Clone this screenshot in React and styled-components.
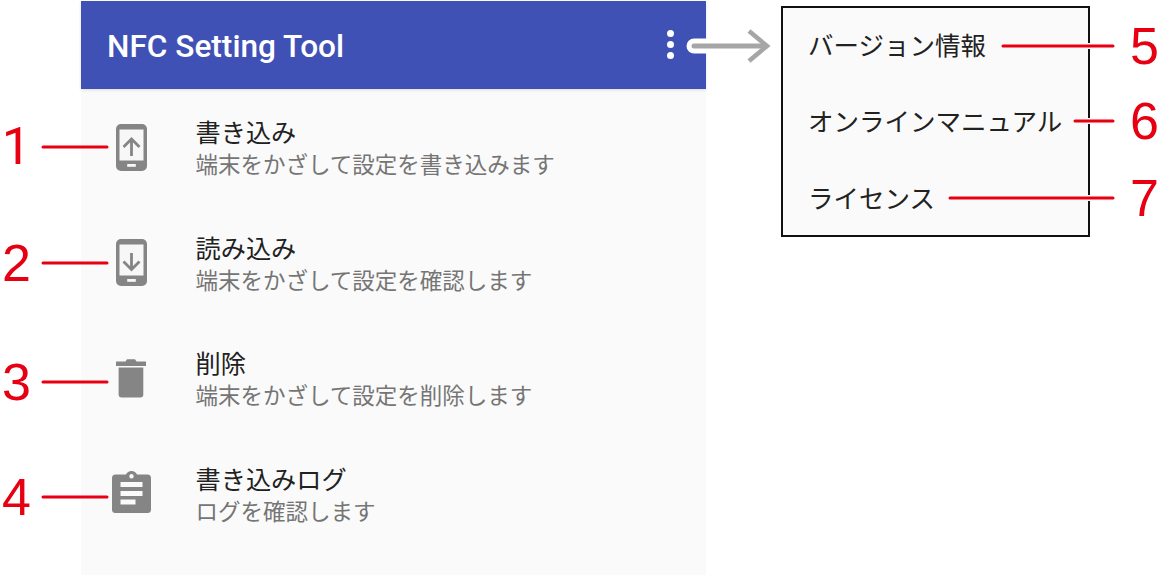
import React from "react";
import styled, { createGlobalStyle } from "styled-components";

const Global = createGlobalStyle`
  html, body { margin: 0; padding: 0; background: #fff; }
  body { width: 1160px; height: 575px; overflow: hidden; font-family: "Noto Sans CJK JP", Roboto, sans-serif; }
`;
const Page = styled.div`
  position: relative; width: 1160px; height: 575px; display: flex; align-items: flex-start;
  padding: 1px 0 0 81px; box-sizing: border-box; gap: 75px;
`;
const Phone = styled.section`
  width: 625px; height: 574px; background: #fafafa; flex: none; display: flex; flex-direction: column;
`;
const AppBar = styled.header`
  height: 88px; background: #3f51b5; flex: none; display: flex; align-items: center; justify-content: space-between;
  padding: 0 32px 0 26px; box-shadow: 0 1px 3px rgba(0,0,0,.12); box-sizing: border-box;
`;
const Title = styled.h1`
  margin: 4px 0 0; color: #fff; font: 500 31.6px/1 Roboto, sans-serif;
`;
const Dots = styled.div`
  display: flex; flex-direction: column; gap: 4px; margin-top: -2px;
`;
const Dot = styled.span`
  width: 7px; height: 7px; border-radius: 50%; background: #fff; display: block;
`;
const List = styled.ul`
  list-style: none; margin: 0; padding: 26px 0 0; display: flex; flex-direction: column;
`;
const Row = styled.li`
  height: 115.67px; display: flex; box-sizing: border-box;
`;
const IconCell = styled.div`
  width: 100px; margin-right: 15px; flex: none; height: 64px; display: flex; align-items: center; justify-content: center;
  color: #858585;
`;
const Texts = styled.div`
  display: flex; flex-direction: column; margin-left: -0.5px;
`;
const RowTitle = styled.div`
  font-size: 25.2px; line-height: 32px; color: #212121;
`;
const RowSub = styled.div`
  font-size: 22.5px; line-height: 32px; color: #757575;
`;
const Menu = styled.nav`
  width: 309px; height: 231px; margin-top: 5px; box-sizing: border-box; border: 2px solid #111; background: #fafafa;
  display: flex; flex-direction: column; flex: none; padding: 20px 0 0 26px;
`;
const MenuItem = styled.div`
  line-height: 32px; margin-bottom: ${p => p.$after}px; margin-left: -1px;
  font-size: 25.5px; color: #212121; white-space: nowrap;
`;
const Overlay = styled.svg`
  position: absolute; left: 0; top: 0; pointer-events: none;
`;
const Num = styled.span`
  position: absolute; top: ${p => p.$y - 30}px;
  ${p => p.$right ? "left: 1130px;" : `right: ${p.$one ? 1129 : 1129}px;`}
  font: 400 52px/60px ${p => p.$one ? "Roboto" : '"Liberation Sans"'}, Arial, sans-serif; color: #e60012;
`;
const ClipSvg = styled.svg`
  margin-top: -4px;
`;

const PhoneIcon = ({ down }) => (
  <svg width="31" height="47" viewBox="0 0 31 47">
    <rect x="0" y="0" width="31" height="47" rx="5" fill="currentColor" />
    <rect x="3.5" y="5.5" width="24" height="31" fill="#f7f7f7" />
    <rect x="11.2" y="40" width="8.6" height="2.8" fill="#f7f7f7" />
    {down
      ? <path d="M15.5 14v16.5M7.5 22.5l8 8 8-8" fill="none" stroke="currentColor" strokeWidth="2.8" />
      : <path d="M15.5 32V15.5M7.5 23l8-8 8 8" fill="none" stroke="currentColor" strokeWidth="2.8" />}
  </svg>
);
const TrashIcon = () => (
  <svg width="30" height="39" viewBox="0 0 30 39">
    <path d="M0 2.5h9.5L11 0.3h8l1.5 2.2H30V7H0z" fill="currentColor" />
    <path d="M2.6 8.4h24.7v27a3 3 0 0 1-3 3H5.6a3 3 0 0 1-3-3z" fill="currentColor" />
  </svg>
);
const ClipIcon = () => (
  <ClipSvg width="39" height="43" viewBox="0 0 39 43">
    <path fillRule="evenodd" fill="currentColor" d="M3.5 4.5H14a6 6 0 0 1 11 0h10.500a3.500 3.500 0 0 1 3.500 3.500v31.500a3.500 3.500 0 0 1-3.500 3.500H3.500A3.500 3.500 0 0 1 0 39.500V8a3.500 3.500 0 0 1 3.500-3.500zM19.500 4a2.200 2.200 0 1 0 0 4.400 2.200 2.200 0 0 0 0-4.400z" />
    <path fill="#fafafa" d="M8.500 12h22v5h-22zM8.500 21h22v5h-22zM8.500 29.500h15v5h-15z" />
  </ClipSvg>
);

const rows = [
  { icon: <PhoneIcon />, t: "書き込み", s: "端末をかざして設定を書き込みます" },
  { icon: <PhoneIcon down />, t: "読み込み", s: "端末をかざして設定を確認します" },
  { icon: <TrashIcon />, t: "削除", s: "端末をかざして設定を削除します" },
  { icon: <ClipIcon />, t: "書き込みログ", s: "ログを確認します" },
];
const leftLines = [147, 263, 382, 497];
const rightLines = [[1003, 46], [1075, 121], [950, 198]];

export default function App() {
  return (
    <Page>
      <Global />
      <Phone>
        <AppBar>
          <Title>NFC Setting Tool</Title>
          <Dots><Dot /><Dot /><Dot /></Dots>
        </AppBar>
        <List>
          {rows.map(r => (
            <Row key={r.t}>
              <IconCell>{r.icon}</IconCell>
              <Texts>
                <RowTitle>{r.t}</RowTitle>
                <RowSub>{r.s}</RowSub>
              </Texts>
            </Row>
          ))}
        </List>
      </Phone>
      <Menu>
        <MenuItem $after={44}>バージョン情報</MenuItem>
        <MenuItem $after={45}>オンラインマニュアル</MenuItem>
        <MenuItem $after={0}>ライセンス</MenuItem>
      </Menu>
      <Overlay width="1160" height="575" viewBox="0 0 1160 575">
        <path d="M694 46H706" stroke="#fff" strokeWidth="15" strokeLinecap="round" fill="none" />
        <path d="M694 46H766" stroke="#a6a6a6" strokeWidth="5" strokeLinecap="round" fill="none" />
        <path d="M749 31l18 15-18 15" stroke="#a6a6a6" strokeWidth="4.5" strokeLinecap="butt" strokeLinejoin="miter" fill="none" />
        {leftLines.map(y => (
          <path key={y} d={`M43 ${y}H107`} stroke="#e60012" strokeWidth="3" strokeLinecap="round" />
        ))}
        {rightLines.map(([x, y]) => (
          <g key={y}>
            <path d={`M${x} ${y}H1113`} stroke="#fafafa" strokeWidth="6" />
            <path d={`M${x} ${y}H1113`} stroke="#e60012" strokeWidth="3" strokeLinecap="round" />
          </g>
        ))}
      </Overlay>
      {["1", "2", "3", "4"].map((n, i) => <Num key={n} $one={n === "1"} $y={leftLines[i] - 0.5}>{n}</Num>)}
      {["5", "6", "7"].map((n, i) => <Num key={n} $right $y={rightLines[i][1] - 0.5}>{n}</Num>)}
    </Page>
  );
}
